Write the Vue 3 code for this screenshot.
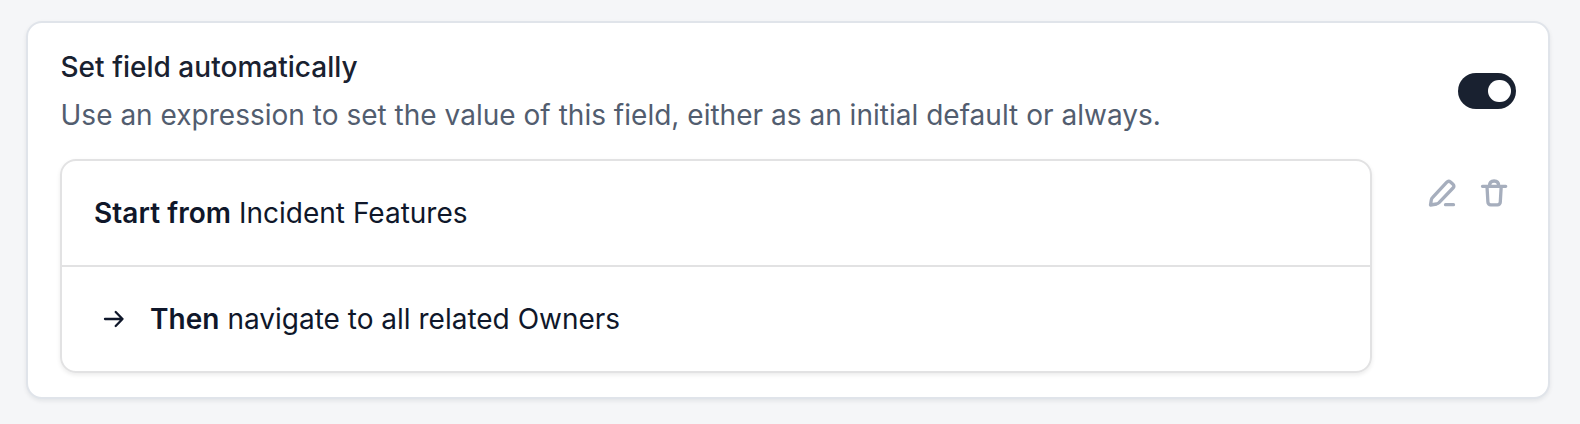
<script setup>
const steps = [
  { lead: 'Start from', text: 'Incident Features', arrow: false },
  { lead: 'Then', text: 'navigate to all related Owners', arrow: true },
]
</script>

<template>
  <main class="page">
    <section class="card">
      <header class="head">
        <div class="copy">
          <h2 class="title">Set field automatically</h2>
          <p class="desc">Use an expression to set the value of this field, either as an initial default or always.</p>
        </div>
        <button class="toggle" role="switch" aria-checked="true"><span class="knob"></span></button>
      </header>
      <div class="body">
        <div class="steps">
          <div v-for="s in steps" :key="s.lead" class="step">
            <svg v-if="s.arrow" class="arrow" viewBox="0 0 40 40"><path d="M11 20H28.500M21.700 13L28.500 20L21.700 27" /></svg>
            <p><b>{{ s.lead }}</b> {{ s.text }}</p>
          </div>
        </div>
        <div class="actions">
          <svg class="icon" viewBox="0 0 32 32"><path d="M4.500 28L5.300 23Q5.600 21.500 6.700 20.400L20.600 5.300Q22.500 3.300 24.500 5L26.700 7Q29 9 27 11L13 25.700Q12 26.700 10.600 27ZM19.500 27.700H27.500" /></svg>
          <svg class="icon" viewBox="0 0 32 32"><path d="M4.500 9.300H27.700M11.500 9Q11.500 4 16.100 4Q20.700 4 20.700 9M9 9.300L9.900 25A2.800 2.800 0 0 0 12.700 27.800H19.500A2.800 2.800 0 0 0 22.300 25L23.200 9.300" /></svg>
        </div>
      </div>
    </section>
  </main>
</template>

<style>
body { background: #f5f6f8; }
</style>
<style scoped>
* { box-sizing: border-box; }
.page { height: 424px; padding: 21px 30px 25px 26px; font-family: Inter, sans-serif; font-size: 28px; line-height: 48px; color: #0f172a; }
.card { height: 378px; background: #fff; border: 2px solid #e0e4ea; border-radius: 16px; padding: 20px 32px; box-shadow: 0 2px 4px rgba(15, 23, 42, .08); }
.head { display: flex; justify-content: space-between; align-items: center; height: 96px; }
.copy { padding-left: .5px; }
.title, .desc, p { margin: 0; font-size: 28px; }
.title { font-weight: 500; color: #192130; letter-spacing: .03px; }
.desc { color: #525d6f; letter-spacing: .016px; }
.toggle { width: 58px; height: 36px; border: 0; padding: 6.75px 5.5px; border-radius: 18px; background: #192130; display: flex; justify-content: flex-end; }
.knob { width: 22.5px; height: 22.5px; border-radius: 50%; background: #fff; }
.body { display: flex; justify-content: space-between; margin-top: 20px; }
.steps { width: 1312px; height: 214px; border: 2px solid #e2e2e3; border-radius: 16px; box-shadow: 0 2px 4px rgba(0, 0, 0, .08); }
.step { height: 104px; display: flex; align-items: center; padding: 0 32px; }
.step + .step { height: 106px; border-top: 2px solid #e2e2e3; }
.step b { font-weight: 600; letter-spacing: .06px; }
.arrow { width: 40px; height: 40px; margin-right: 16px; fill: none; stroke: #0f172a; stroke-width: 2.3; stroke-linecap: round; stroke-linejoin: round; }
.actions { display: flex; gap: 20px; padding: 18px 6px; }
.icon { width: 32px; height: 32px; fill: none; stroke: #a6aebd; stroke-width: 3.3; stroke-linecap: round; stroke-linejoin: round; }
</style>
